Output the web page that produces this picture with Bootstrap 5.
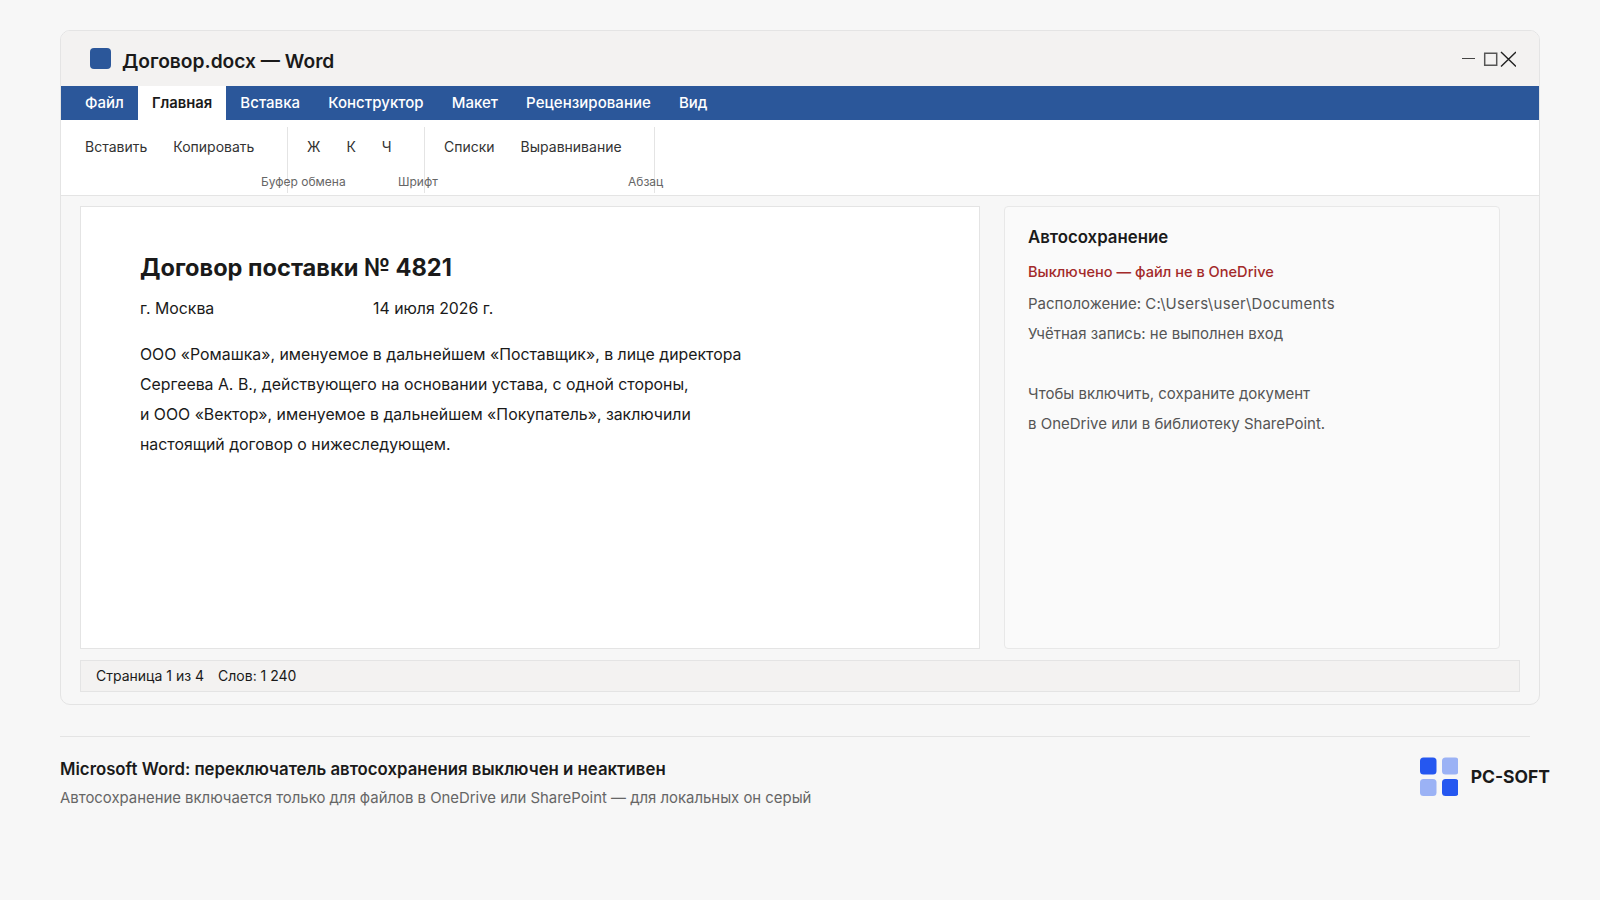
<!DOCTYPE html>
<html lang="ru">
<head>
<meta charset="UTF-8">
<title>Word</title>
<link href="https://cdn.jsdelivr.net/npm/bootstrap@5.3.3/dist/css/bootstrap.min.css" rel="stylesheet">
<style>
body { background: #f7f7f7; font-family: Inter, "Noto Sans", sans-serif; color: #1a1a1a; }
.stage { padding: 30px 60px 0; width: 1600px; }
.win { width: 1480px; height: 675px; border: 1px solid #e4e4e4; border-radius: 10px; overflow: hidden; background: #f7f7f7; }
.win-title { height: 55px; background: #f3f2f1; padding: 0 23px 0 29px; }
.win-mark { width: 21px; height: 21px; border-radius: 4px; background: #2b579a; }
.win-name { font-size: 19.2px; font-weight: 600; margin-left: 11px; margin-top: 6px; }
.tabbar { height: 34px; background: #2b579a; padding-left: 10px; }
.tabitem { color: #fff; font-size: 15px; font-weight: 500; letter-spacing: .04px; padding: 0 14px; line-height: 34px; }
.tabitem.on { background: #fff; color: #1a1a1a; font-size: 14.8px; font-weight: 600; letter-spacing: 0; }
.ribbon { height: 76px; background: #fff; border-bottom: 1px solid #e4e4e4; }
.rb-group { position: relative; height: 66px; padding: 9px 0 0 19px; gap: 26px; font-size: 14px; color: #333; border-right: 1px solid #e4e4e4; margin-top: 7px; }
.rb-clip { width: 227px; padding-left: 24px; }
.rb-font { width: 137px; }
.rb-para { width: 230px; }
.rb-label { position: absolute; font-size: 12px; color: #666; top: 46px; white-space: nowrap; }
.rb-clip .rb-label { left: 200px; }
.rb-font .rb-label { left: 110px; }
.rb-para .rb-label { left: 203px; }
.work { padding: 10px 19px 0; gap: 24px; }
.docpage { width: 900px; height: 443px; background: #fff; border: 1px solid #e4e4e4; padding: 47px 59px; }
.docpage h1 { font-size: 23.6px; font-weight: 700; margin: 0 0 12px; }
.docline { font-size: 15.85px; line-height: 30px; }
.doc-city { width: 233px; }
.side { width: 496px; height: 443px; background: #fafafa; border: 1px solid #e8e8e8; border-radius: 4px; padding: 18px 23px; }
.side h2 { font-size: 16.8px; font-weight: 600; margin: 0 0 11px; line-height: 24px; }
.side-off { color: #a32a2a; font-size: 14.6px; font-weight: 500; line-height: 24px; margin-bottom: 5px; }
.side-row { color: #555; font-size: 15px; line-height: 30px; }
.side-path { letter-spacing: .3px; }
.side-gap { margin-top: 30px; }
.statusbar { margin: 11px 19px 0; height: 32px; background: #f3f2f1; border: 1px solid #e4e4e4; padding: 0 0 1px 15px; gap: 14px; font-size: 14px; }
.foot-rule { margin-top: 31px; width: 1470px; border-top: 1px solid #e4e4e4; }
.foot { padding-top: 20px; width: 1490px; }
.foot-title { font-size: 16.8px; font-weight: 600; }
.foot-sub { font-size: 14.9px; color: #666; margin-top: 5px; }
.brand { font-size: 17.5px; font-weight: 700; gap: 13px; height: 41px; }
</style>
</head>
<body>
<div class="stage">
  <div class="win">
    <div class="win-title d-flex align-items-center">
      <span class="win-mark"></span>
      <span class="win-name">Договор.docx — Word</span>
      <svg class="ms-auto" width="54" height="18" viewBox="0 0 54 18" fill="none">
        <path d="M0 8.5h13" stroke="#444" stroke-width="1"/>
        <path d="M22.7 3.2h12v12h-12z" stroke="#555" stroke-width="1.5"/>
        <path d="M39 2l15 14.5M54 2 39 16.5" stroke="#222" stroke-width="1.4"/>
      </svg>
    </div>
    <div class="tabbar d-flex">
      <span class="tabitem">Файл</span><span class="tabitem on">Главная</span><span class="tabitem">Вставка</span><span class="tabitem">Конструктор</span><span class="tabitem">Макет</span><span class="tabitem">Рецензирование</span><span class="tabitem">Вид</span>
    </div>
    <div class="ribbon d-flex">
      <div class="rb-group rb-clip d-flex"><span>Вставить</span><span>Копировать</span><span class="rb-label">Буфер обмена</span></div>
      <div class="rb-group rb-font d-flex"><span>Ж</span><span>К</span><span>Ч</span><span class="rb-label">Шрифт</span></div>
      <div class="rb-group rb-para d-flex"><span>Списки</span><span>Выравнивание</span><span class="rb-label">Абзац</span></div>
    </div>
    <div class="work d-flex">
      <div class="docpage">
        <h1>Договор поставки № 4821</h1>
        <div class="docline d-flex"><span class="doc-city">г. Москва</span><span>14 июля 2026 г.</span></div>
        <div class="docline mt-3">ООО «Ромашка», именуемое в дальнейшем «Поставщик», в лице директора</div>
        <div class="docline">Сергеева А. В., действующего на основании устава, с одной стороны,</div>
        <div class="docline">и ООО «Вектор», именуемое в дальнейшем «Покупатель», заключили</div>
        <div class="docline">настоящий договор о нижеследующем.</div>
      </div>
      <div class="side">
        <h2>Автосохранение</h2>
        <div class="side-off">Выключено — файл не в OneDrive</div>
        <div class="side-row">Расположение: <span class="side-path">C:\Users\user\Documents</span></div>
        <div class="side-row">Учётная запись: не выполнен вход</div>
        <div class="side-row side-gap">Чтобы включить, сохраните документ</div>
        <div class="side-row">в OneDrive или в библиотеку SharePoint.</div>
      </div>
    </div>
    <div class="statusbar d-flex align-items-center"><span>Страница 1 из 4</span><span>Слов: 1 240</span></div>
  </div>
  <div class="foot-rule"></div>
  <div class="foot d-flex justify-content-between align-items-start">
    <div>
      <div class="foot-title">Microsoft Word: переключатель автосохранения выключен и неактивен</div>
      <div class="foot-sub">Автосохранение включается только для файлов в OneDrive или SharePoint — для локальных он серый</div>
    </div>
    <div class="brand d-flex align-items-center">
      <svg width="38" height="41" viewBox="0 0 38 41">
        <rect x="0" y="0.5" width="16.5" height="17" rx="3.5" fill="#2557f0"/>
        <rect x="22" y="0.5" width="16.5" height="17" rx="3.5" fill="#9bb2f5"/>
        <rect x="0" y="22" width="16.5" height="17" rx="3.5" fill="#9bb2f5"/>
        <rect x="22" y="22" width="16.5" height="17" rx="3.5" fill="#2557f0"/>
      </svg>
      <span>PC-SOFT</span>
    </div>
  </div>
</div>
</body>
</html>
